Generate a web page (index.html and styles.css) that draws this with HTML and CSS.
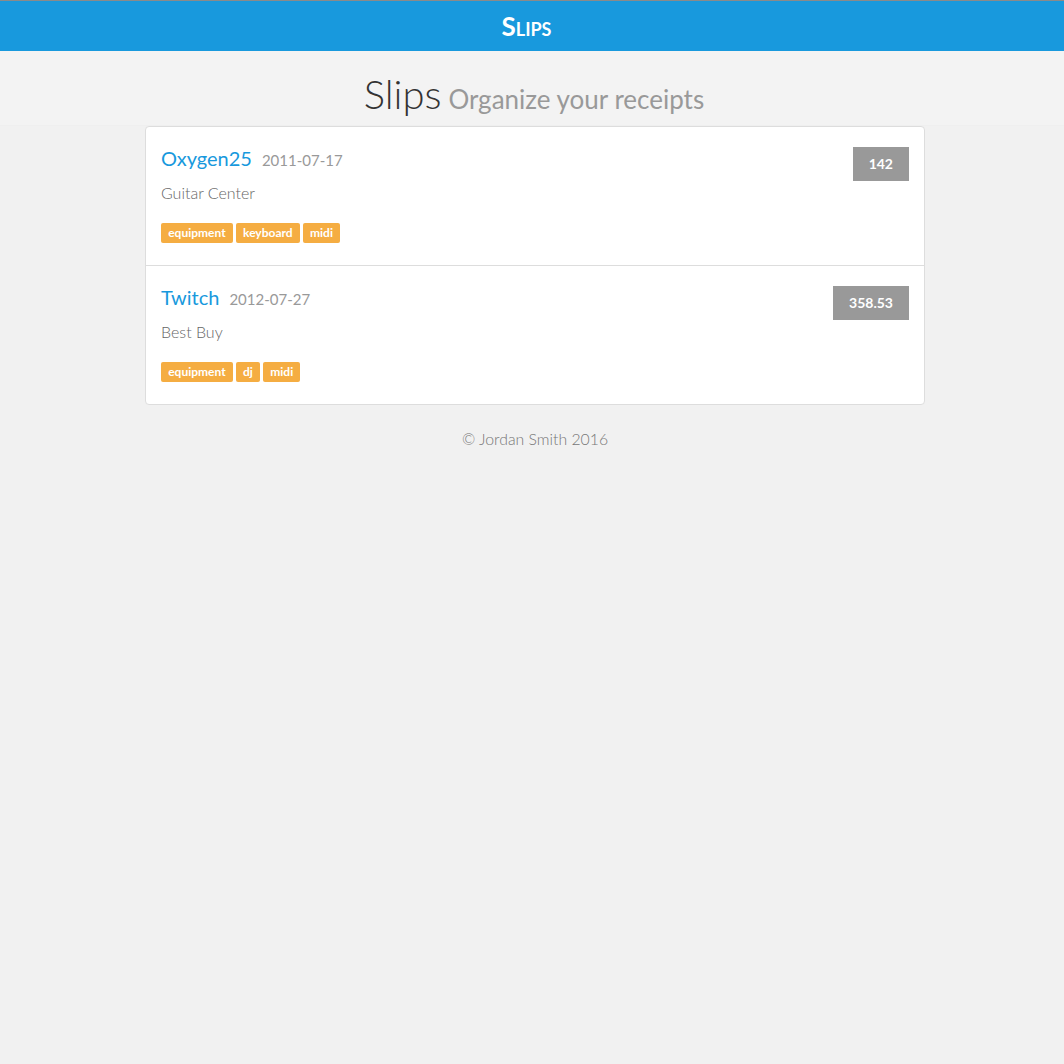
FILE: index.html
```html
<!DOCTYPE html>
<html>
<head>
<meta charset="utf-8">
<link rel="stylesheet" href="styles.css">
</head>
<body>
<nav class="navbar"><span class="brand">Slips</span></nav>
<header class="hero">
  <h1 class="title">Slips <small class="subtitle">Organize your receipts</small></h1>
</header>
<main class="container">
  <ul class="slips">
    <li class="slip">
      <div class="slip-main">
        <h4 class="slip-head"><a class="slip-name">Oxygen25</a><span class="slip-date">2011-07-17</span></h4>
        <p class="slip-store">Guitar Center</p>
        <div class="tags"><span class="tag">equipment</span><span class="tag">keyboard</span><span class="tag">midi</span></div>
      </div>
      <span class="amount">142</span>
    </li>
    <li class="slip">
      <div class="slip-main">
        <h4 class="slip-head"><a class="slip-name">Twitch</a><span class="slip-date">2012-07-27</span></h4>
        <p class="slip-store">Best Buy</p>
        <div class="tags"><span class="tag">equipment</span><span class="tag">dj</span><span class="tag">midi</span></div>
      </div>
      <span class="amount">358.53</span>
    </li>
  </ul>
  <footer class="footer">© Jordan Smith 2016</footer>
</main>
</body>
</html>
```

FILE: styles.css
```css
* { box-sizing: border-box; }
html, body { margin: 0; padding: 0; }
body {
  background: #f1f1f1;
  font-family: Lato, "Open Sans", sans-serif;
  color: #555;
}
.navbar {
  height: 51px;
  background: #1899dd;
  border-top: 1px solid #8a8a8a;
  display: flex;
  align-items: center;
  justify-content: center;
}
.brand {
  color: #fff;
  font-weight: 700;
  font-size: 26px;
  font-variant: small-caps;
  margin-left: -11px;
}
.hero {
  background: #f3f3f3;
  height: 75px;
  border-bottom: 1px solid #efefef;
  display: flex;
  justify-content: center;
  align-items: flex-start;
}
.title {
  margin: 18px 0 0 4px;
  font-weight: 300;
  font-size: 40px;
  line-height: 50px;
  color: #333;
}
.subtitle {
  font-size: 26px;
  font-weight: 400;
  color: #999;
  margin-left: -4px;
}
.container {
  width: 780px;
  margin: 0 0 0 calc(50% - 387px);
}
.slips {
  list-style: none;
  margin: 0;
  padding: 0;
  background: #fff;
  border: 1px solid #ddd;
  border-radius: 4px;
}
.slip {
  display: flex;
  justify-content: space-between;
  align-items: flex-start;
  padding: 20px 15px 0 15px;
  height: 138px;
}
.slip + .slip {
  border-top: 1px solid #ddd;
  height: 139px;
}
.slip-head {
  margin: -1px 0 0;
  display: flex;
  align-items: baseline;
  gap: 10px;
  font-weight: 400;
  line-height: 24px;
}
.slip-name {
  color: #1899dd;
  font-size: 20px;
}
.slip-date {
  color: #999;
  font-size: 15px;
}
.slip-store {
  margin: 11px 0 0;
  font-size: 16px;
  font-weight: 300;
  color: #666;
  line-height: 20px;
}
.tags {
  margin-top: 20px;
  display: flex;
  gap: 3px;
}
.tag {
  background: #f5ad42;
  color: #fff;
  font-weight: 700;
  font-size: 12px;
  line-height: 20px;
  height: 20px;
  padding: 0 7.2px;
  border-radius: 2px;
}
.amount {
  background: #999;
  color: #fff;
  font-weight: 700;
  font-size: 14px;
  height: 34px;
  line-height: 34px;
  padding: 0 16px;
}
.footer {
  text-align: center;
  padding-top: 24px;
  font-size: 15.8px;
  font-weight: 300;
  color: #777;
}
```
